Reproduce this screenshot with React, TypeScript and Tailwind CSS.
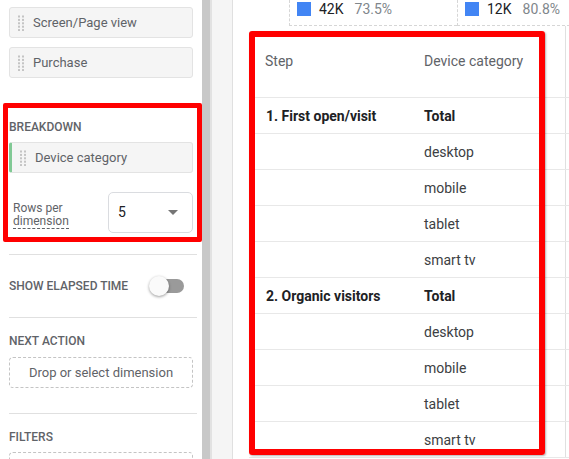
const STEPS = [
  { name: '1. First open/visit', devices: ['desktop', 'mobile', 'tablet', 'smart tv'] },
  { name: '2. Organic visitors', devices: ['desktop', 'mobile', 'tablet', 'smart tv'] },
]

function DragHandle() {
  return (
    <svg width="8" height="16" viewBox="0 0 8 16" className="shrink-0">
      {[0, 1, 2, 3, 4].map((r) =>
        [0, 1].map((c) => (
          <rect key={`${r}-${c}`} x={1 + c * 4} y={0.5 + r * 3.4} width="2" height="2" fill="#c4c4c4" />
        )),
      )}
    </svg>
  )
}

function Chip({ label, accent }: { label: string; accent?: boolean }) {
  return (
    <div
      className={`flex h-[31px] items-center gap-[8px] rounded-[3px] border border-[#e3e3e3] bg-[#f5f5f5] pl-[7px] pt-[1px] text-[13px] text-[#5f6368] ${
        accent ? 'border-l-[3px] border-l-[#81c995] pl-[7px]' : ''
      }`}
    >
      <DragHandle />
      <span>{label}</span>
    </div>
  )
}

function SectionLabel({ children }: { children: string }) {
  return <div className="text-[12px] font-medium uppercase leading-[16px] text-[#5f6368]">{children}</div>
}

function Sidebar() {
  return (
    <div className="w-[202px] shrink-0 bg-white pl-[9px] pr-[9px] pt-[7px]">
      <Chip label="Screen/Page view" />
      <div className="mt-[9px]">
        <Chip label="Purchase" />
      </div>

      <div className="mt-[41px]">
        <SectionLabel>Breakdown</SectionLabel>
      </div>
      <div className="mt-[7px]">
        <Chip label="Device category" accent />
      </div>

      <div className="mt-[19px] flex items-center">
        <div className="w-[99px] pl-[4px] pt-[8px]">
          <span className="inline-block border-b border-dashed border-[#5f6368] text-[12px] leading-[13px] text-[#5f6368]">
            Rows per
            <br />
            dimension
          </span>
        </div>
        <div className="flex h-[41px] flex-1 items-center justify-between rounded-[5px] border border-[#dadce0] pl-[9px] pr-[14px] text-[14px] text-[#202124]">
          <span>5</span>
          <svg width="10" height="5" viewBox="0 0 10 5">
            <path d="M0 0 L10 0 L5 5 Z" fill="#757575" />
          </svg>
        </div>
      </div>

      <div className="mr-[-4px] mt-[21px] h-px bg-[#e0e0e0]" />

      <div className="flex h-[62px] items-center">
        <SectionLabel>Show elapsed time</SectionLabel>
        <div className="relative ml-[21px] h-[14px] w-[35px]">
          <div className="ml-[2px] h-[14px] w-[33px] rounded-full bg-[#9a9a9a]" />
          <div className="absolute left-0 top-[-3px] h-[20px] w-[20px] rounded-full bg-[#fafafa] shadow-[0_1px_3px_rgba(0,0,0,0.4)]" />
        </div>
      </div>

      <div className="mr-[-4px] h-px bg-[#e0e0e0]" />

      <div className="mt-[15px]">
        <SectionLabel>Next action</SectionLabel>
      </div>
      <div className="mt-[8px] flex h-[31px] items-center justify-center rounded-[4px] border border-dashed border-[#c4c4c4] text-[13px] text-[#5f6368]">
        Drop or select dimension
      </div>

      <div className="mr-[-4px] mt-[25px] h-px bg-[#e0e0e0]" />

      <div className="mt-[15px]">
        <SectionLabel>Filters</SectionLabel>
      </div>
      <div className="mt-[7px] h-[31px] rounded-[4px] border border-dashed border-[#c4c4c4]" />
    </div>
  )
}

function Summary({ value, pct }: { value: string; pct: string }) {
  return (
    <div className="flex h-[26px] w-[168px] shrink-0 items-start gap-[8px] border-b border-l border-dashed border-[#d6d6d6] pl-[7px] pt-[1px]">
      <div className="mt-[1px] h-[14px] w-[14px] bg-[#4285f4]" />
      <span className="text-[14px] leading-[17px] text-[#202124]">{value}</span>
      <span className="ml-[3px] text-[14px] leading-[17px] text-[#80868b]">{pct}</span>
    </div>
  )
}

function Row({ step, device, bold }: { step?: string; device: string; bold?: boolean }) {
  return (
    <div className="flex h-[36px] items-stretch border-b border-[#e8e8e8] text-[14px]">
      <div className={`flex w-[159px] items-center pl-[17px] pt-[2px] ${bold ? 'font-bold text-[#202124]' : ''}`}>
        {step}
      </div>
      <div
        className={`flex w-[158px] items-center border-r border-[#e0e0e0] pl-[16px] pt-[2px] ${
          bold ? 'font-bold text-[#202124]' : 'text-[#3c4043]'
        }`}
      >
        {device}
      </div>
      <div className="flex-1" />
    </div>
  )
}

export default function App() {
  return (
    <div className="relative flex h-[459px] w-[569px] overflow-hidden bg-white font-['Roboto',sans-serif]">
      <Sidebar />

      {/* scrollbar + gutter */}
      <div className="w-[8px] shrink-0 bg-[#c8c8c8]" />
      <div className="w-[2px] shrink-0 bg-[#e2e2e2]" />
      <div className="w-[21px] shrink-0 border-r border-[#e0e0e0] bg-[#f5f5f5]" />

      <div className="min-w-0 flex-1 bg-white">
        <div className="flex pl-[56px]">
          <Summary value="42K" pct="73.5%" />
          <Summary value="12K" pct="80.8%" />
          <div className="h-[26px] flex-1 border-b border-dashed border-[#d6d6d6]" />
        </div>

        <div className="ml-[16px]">
          <div className="flex h-[72px] items-stretch border-b border-[#e8e8e8] text-[14px] text-[#5f6368]">
            <div className="flex w-[159px] items-center pl-[16px]">Step</div>
            <div className="flex w-[158px] items-center border-r border-[#e0e0e0] pl-[16px]">Device category</div>
            <div className="flex-1" />
          </div>
          {STEPS.map((s) => (
            <div key={s.name}>
              <Row step={s.name} device="Total" bold />
              {s.devices.map((d) => (
                <Row key={d} device={d} />
              ))}
            </div>
          ))}
        </div>
      </div>

      {/* annotation boxes */}
      <div className="pointer-events-none absolute left-[3px] top-[103px] h-[139px] w-[199px] rounded-[2px] border-[5px] border-[#ff0000]" />
      <div className="pointer-events-none absolute left-[249px] top-[31px] h-[424px] w-[296px] rounded-[3px] border-[6px] border-[#ff0000] shadow-[1px_1px_2px_rgba(0,0,0,0.3)]" />
    </div>
  )
}
